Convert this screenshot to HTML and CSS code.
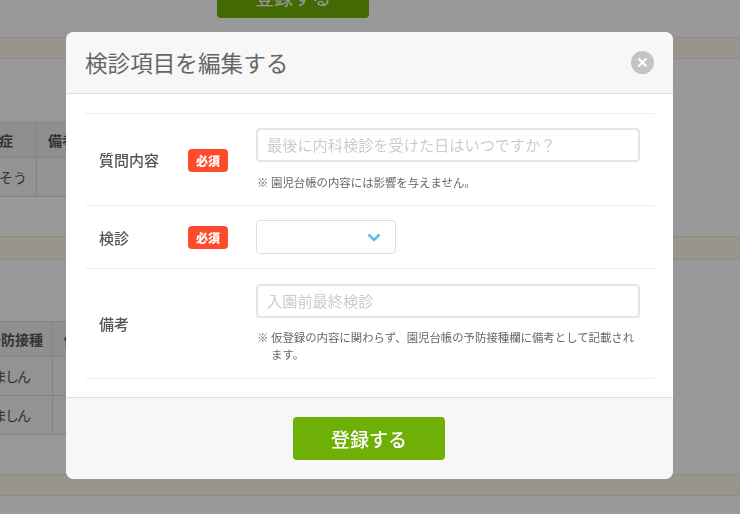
FILE: index.html
```html
<!DOCTYPE html>
<html lang="ja">
<head>
    <meta charset="UTF-8">
    <meta name="viewport" content="width=device-width, initial-scale=1.0">
    <title>検診項目を編集する</title>
    <link rel="stylesheet" href="styles.css">
</head>
<body>

    <div class="page">
        <div class="page-btn-cont">
            <button type="button" class="page-btn">登録する</button>
        </div>

        <div class="band band-first"></div>
        <table class="tbl tbl-first">
            <tr><th>感染症</th><th>備考</th></tr>
            <tr><td>ありそう</td><td></td></tr>
        </table>

        <div class="band band-second"></div>
        <table class="tbl tbl-second">
            <tr><th>予防接種</th><th>備考</th></tr>
            <tr><td>ましん</td><td></td></tr>
            <tr><td>ましん</td><td></td></tr>
        </table>

        <div class="band band-third"></div>
    </div>

    <div class="overlay">
        <div class="modal">
            <div class="modal-head">
                <h2 class="modal-title">検診項目を編集する</h2>
                <span class="close">
                    <svg width="11" height="11" viewBox="0 0 11 11"><path d="M1.5 1.5L9.5 9.5M9.5 1.5L1.5 9.5" stroke="#fff" stroke-width="2.2" fill="none"/></svg>
                </span>
            </div>

            <div class="modal-body">
                <div class="row">
                    <div class="row-label">質問内容</div>
                    <span class="req">必須</span>
                    <div class="row-field">
                        <input class="txt" type="text" placeholder="最後に内科検診を受けた日はいつですか？">
                        <p class="hint"><span class="mark">※</span><span>園児台帳の内容には影響を与えません。</span></p>
                    </div>
                </div>
                <div class="row">
                    <div class="row-label">検診</div>
                    <span class="req">必須</span>
                    <div class="row-field">
                        <div class="sel">
                            <svg width="14" height="9" viewBox="0 0 14 9"><path d="M1.5 1.5L7 7L12.5 1.5" stroke="#5bc0de" stroke-width="2.6" fill="none"/></svg>
                        </div>
                    </div>
                </div>
                <div class="row row-note">
                    <div class="row-label">備考</div>
                    <div class="row-field row-field-noreq">
                        <input class="txt" type="text" placeholder="入園前最終検診">
                        <p class="hint"><span class="mark">※</span><span>仮登録の内容に関わらず、園児台帳の予防接種欄に備考として記載されます。</span></p>
                    </div>
                </div>
            </div>

            <div class="modal-foot">
                <button type="button" class="submit">登録する</button>
            </div>
        </div>
    </div>

</body>
</html>
```

FILE: styles.css
```css
* {
    box-sizing: border-box;
}
html, body {
    margin: 0;
    height: 100%;
    overflow: hidden;
}
body {
    background-color: white;
    color: #555;
    font-family: "Noto Sans CJK JP", "Noto Sans", sans-serif;
}
.page {
    height: 514px;
    overflow: hidden;
}
.page-btn-cont {
    margin-top: -25px;
    padding-left: 217px;
}
.page-btn {
    display: block;
    width: 152px;
    height: 43px;
    border: 0;
    border-radius: 4px;
    background-color: #6eb005;
    color: white;
    font-family: inherit;
    font-size: 19px;
}
.band {
    height: 22px;
    background-color: #fff9ec;
    border-top: 1px solid #f0e8d8;
    border-bottom: 1px solid #f0eadc;
}
.band-first {
    margin-top: 19px;
}
.band-second {
    margin-top: 39px;
    height: 24px;
}
.band-third {
    margin-top: 39px;
}
.tbl {
    border-collapse: collapse;
    font-size: 14px;
    white-space: nowrap;
}
.tbl th, .tbl td {
    border: 1px solid #ddd;
    padding: 0 11px;
    text-align: left;
}
.tbl th {
    height: 35px;
    background-color: #eee;
}
.tbl td {
    height: 39px;
    background-color: #f6f6f6;
}
.tbl-first {
    margin-top: 63px;
    margin-left: -41px;
}
.tbl-first th:first-child {
    width: 77px;
}
.tbl-first td:first-child {
    padding-right: 8px;
}
.tbl-second {
    margin-top: 61px;
    margin-left: -25px;
}
.tbl-second th:first-child {
    width: 77px;
    padding-right: 8px;
}
.tbl-second td:first-child {
    padding-left: 17px;
    letter-spacing: -2px;
}
.overlay {
    position: fixed;
    top: 0;
    left: 0;
    width: 100%;
    height: 100%;
    padding: 32px 0 0 65.5px;
    background-color: rgba(0, 0, 0, 0.4);
}
.modal {
    width: 607px;
    height: 447px;
    border-radius: 8px;
    background-color: white;
    overflow: hidden;
    display: flex;
    flex-direction: column;
}
.modal-head {
    height: 62px;
    padding: 0 19px 1px 19.5px;
    display: flex;
    align-items: center;
    justify-content: space-between;
    background-color: #f7f7f7;
    border-bottom: 1px solid #ddd;
}
.modal-title {
    margin: 0;
    font-size: 22.6px;
    font-weight: 400;
    color: #666;
}
.close {
    width: 23px;
    height: 23px;
    margin-top: 1px;
    border-radius: 50%;
    background-color: #c4c4c4;
    display: flex;
    align-items: center;
    justify-content: center;
}
.modal-body {
    flex: 1;
    padding: 19px 19px 0 19.5px;
}
.row {
    display: flex;
    align-items: center;
    padding: 14px;
    border-top: 1px solid #eee;
}
.row:last-child {
    border-bottom: 1px solid #eee;
}
.row-note {
    padding-top: 15px;
    padding-bottom: 15px;
}
.row-note .hint {
    margin-top: 11px;
}
.row-label {
    width: 89px;
    flex: none;
    font-size: 15px;
    font-weight: 500;
    color: #555;
}
.req {
    width: 40px;
    height: 23px;
    flex: none;
    margin-top: 1px;
    margin-right: 28px;
    border-radius: 4px;
    background-color: #ff4b2b;
    color: white;
    font-size: 12px;
    font-weight: 900;
    line-height: 23px;
    text-align: center;
}
.row-field {
    flex: 1;
    min-width: 0;
}
.row-field-noreq {
    margin-left: 68px;
}
.txt {
    display: block;
    width: 383.5px;
    height: 34px;
    padding: 0 9px 2px;
    border: 2px solid #e6e6e6;
    border-radius: 4px;
    font-family: inherit;
    font-size: 15.2px;
}
.txt::placeholder {
    color: #ccc;
    opacity: 1;
}
.sel {
    width: 140px;
    height: 34px;
    padding-right: 14px;
    border: 1px solid #ddd;
    border-radius: 4px;
    display: flex;
    align-items: center;
    justify-content: flex-end;
}
.hint {
    display: flex;
    width: 380px;
    margin: 12px 0 0;
    font-size: 11.4px;
    line-height: 17px;
    color: #666;
}
.mark {
    flex: none;
    width: 15px;
    padding-left: 1px;
}
.modal-foot {
    height: 82px;
    display: flex;
    justify-content: center;
    padding-top: 19px;
    background-color: #f7f7f7;
    border-top: 1px solid #ddd;
}
.submit {
    width: 152px;
    height: 43px;
    border: 0;
    border-radius: 4px;
    background-color: #6eb005;
    color: white;
    font-family: inherit;
    font-size: 19px;
    font-weight: 500;
}
```
